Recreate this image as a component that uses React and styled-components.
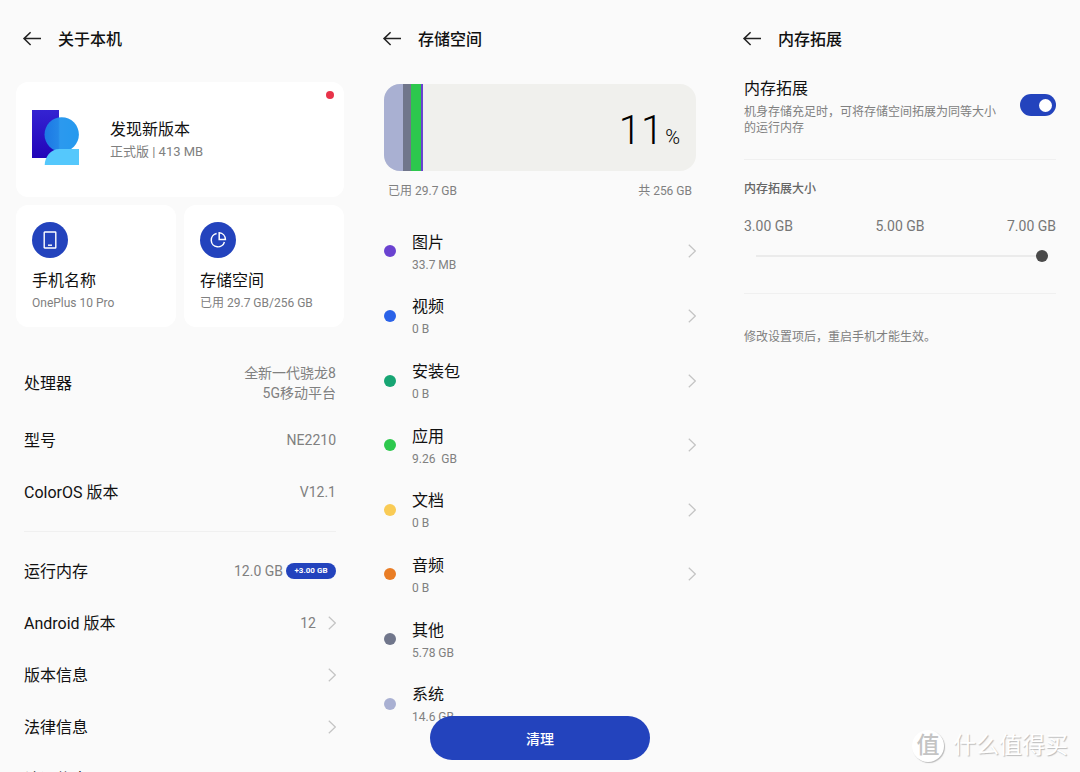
import React, { useState } from "react";
import styled, { createGlobalStyle } from "styled-components";

const GlobalStyle = createGlobalStyle`
  * {
    box-sizing: border-box;
  }
  body {
    margin: 0;
    background: #fafafa;
    color: #111;
    font-family: Roboto, "Noto Sans CJK SC", sans-serif;
    font-size: 16px;
    line-height: 24px;
  }
  h1, h2, p, ul, dl, dd, dt {
    margin: 0;
    padding: 0;
    font-size: inherit;
    font-weight: 400;
  }
  button, input {
    font-family: inherit;
    margin: 0;
  }
`;

const Page = styled.main`
  position: relative;
  display: grid;
  grid-template-columns: repeat(3, 1fr);
  height: 100vh;
  overflow: hidden;
`;

const Screen = styled.section`
  position: relative;
  min-width: 0;
  height: 100vh;
  overflow: hidden;
  padding: 0 24px;
`;

const Header = styled.header`
  display: flex;
  align-items: center;
  gap: 16px;
  height: 78px;

  h1 {
    padding-top: 2px;
    font-weight: 500;
  }
`;

const BackButton = styled.button`
  display: flex;
  width: 20px;
  height: 20px;
  margin-left: -2px;
  padding: 0;
  border: 0;
  background: none;
  color: #222;
`;

const Cards = styled.div`
  display: grid;
  grid-template-columns: 1fr 1fr;
  gap: 8px;
  margin: 4px -8px 25px;
`;

const Card = styled.article`
  padding: 17px 16px 14px;
  border-radius: 12px;
  background: #fff;

  h2 {
    margin-top: 11px;
  }
`;

const UpdateCard = styled(Card)`
  position: relative;
  grid-column: 1 / -1;
  display: flex;
  align-items: center;
  gap: 31px;
  height: 115px;
  padding: 0 16px;

  h2 {
    margin: 0;
  }
`;

const RedDot = styled.span`
  position: absolute;
  top: 9px;
  right: 10px;
  width: 8px;
  height: 8px;
  border-radius: 50%;
  background: #e8334a;
`;

const IconCircle = styled.div`
  display: flex;
  align-items: center;
  justify-content: center;
  width: 36px;
  height: 36px;
  border-radius: 50%;
  background: #2343bd;
`;

const Small = styled.p`
  color: #808080;
  font-size: ${props => (props.$large ? "13px" : "12px")};
  line-height: 20px;
  white-space: pre-wrap;
`;

const Row = styled.div`
  display: flex;
  align-items: center;
  justify-content: space-between;
  height: ${props => (props.$tall ? "62px" : "52px")};

  dt {
    padding-top: 2px;
  }
  dd {
    display: flex;
    align-items: center;
    color: #808080;
    font-size: 14px;
    line-height: 20px;
    text-align: right;
    white-space: pre-line;
  }
  dd svg {
    margin-left: 12px;
  }
`;

const Badge = styled.span`
  display: flex;
  align-items: center;
  justify-content: center;
  width: 50px;
  height: 16px;
  margin-left: 3px;
  border-radius: 8px;
  background: #2343bd;
  color: #fff;
  font-size: 8px;
  font-weight: 700;
`;

const Divider = styled.hr`
  height: 1px;
  margin: ${props => props.$margin};
  border: 0;
  background: #f0f0f0;
`;

const Usage = styled.div`
  display: flex;
  height: 87px;
  margin-top: 6px;
  border-radius: 16px;
  background: #f0f0ed;
  overflow: hidden;
`;

const Segment = styled.span`
  background: ${props => props.$color};
`;

const Percent = styled.p`
  display: flex;
  align-items: baseline;
  margin: 23px 16px 0 auto;
  color: #000;
  font-size: 40px;
  font-weight: 300;
  line-height: 48px;

  small {
    margin-left: 2px;
    font-size: 20px;
  }
`;

const UsageCaption = styled.div`
  display: flex;
  justify-content: space-between;
  margin: 10px 4px 18px;
`;

const CategoryList = styled.ul`
  display: grid;
  grid-auto-rows: 1fr;
  height: 517px;
  list-style: none;
`;

const Category = styled.li`
  display: flex;
  align-items: center;

  div {
    flex: 1;
    padding-top: 3px;
  }
`;

const Dot = styled.span`
  width: 12px;
  height: 12px;
  margin-right: 16px;
  border-radius: 50%;
  background: ${props => props.$color};
`;

const CleanButton = styled.button`
  position: absolute;
  bottom: 12px;
  left: 50%;
  width: 220px;
  height: 44px;
  margin-left: -110px;
  border: 0;
  border-radius: 22px;
  background: #2343bd;
  color: #fff;
  font-size: 14px;
  font-weight: 500;
`;

const SwitchRow = styled.label`
  display: flex;
  justify-content: space-between;
  gap: 24px;
  margin-bottom: 23px;

  h2 {
    margin-bottom: 4px;
    line-height: 22px;
  }
  p {
    color: #808080;
    font-size: 12px;
    line-height: 16px;
  }
`;

const Switch = styled.input`
  appearance: none;
  flex: none;
  display: flex;
  align-items: center;
  width: 36px;
  height: 22px;
  margin-top: 16px;
  padding: 0 4px;
  border-radius: 11px;
  background: #c8c8c8;

  &::before {
    content: "";
    width: 13px;
    height: 13px;
    border-radius: 50%;
    background: #fff;
  }
  &:checked {
    justify-content: flex-end;
    background: #2343bd;
  }
`;

const SizeLabel = styled.label`
  display: block;
  margin-top: 19px;
  color: #666;
  font-size: 12px;
  font-weight: 500;
  line-height: 20px;
`;

const Ticks = styled.div`
  display: flex;
  justify-content: space-between;
  margin-top: 17px;
  color: #777;
  font-size: 14px;
  line-height: 20px;
`;

const SliderBox = styled.div`
  display: flex;
  padding: 14px 8px 0 12px;
`;

const Slider = styled.input`
  appearance: none;
  width: 100%;
  height: 12px;
  background: linear-gradient(#ebebeb, #ebebeb) center / 100% 2px no-repeat;

  &::-webkit-slider-thumb {
    appearance: none;
    width: 12px;
    height: 12px;
    border-radius: 50%;
    background: #4a4a4a;
  }
`;

const Watermark = styled.div`
  position: absolute;
  right: 12px;
  bottom: 10px;
  display: flex;
  align-items: center;
  gap: 9px;
  color: #fff;
  font-size: 23px;
  line-height: 32px;
  text-shadow: 1px 1px 1px #bbb;
`;

const Seal = styled.span`
  width: 32px;
  height: 32px;
  border-radius: 50%;
  background: #fff;
  box-shadow: 1px 1px 1px #bbb;
  color: #c4c4c4;
  font-weight: 500;
  text-align: center;
  text-shadow: none;
`;

const specs = [
  { label: "处理器", value: "全新一代骁龙8\n5G移动平台", tall: true },
  { label: "型号", value: "NE2210" },
  { label: "ColorOS 版本", value: "V12.1" }
];

const details = [
  { label: "运行内存", value: "12.0 GB", badge: "+3.00 GB" },
  { label: "Android 版本", value: "12", link: true },
  { label: "版本信息", link: true },
  { label: "法律信息", link: true },
  { label: "认证信息", link: true }
];

const segments = [
  { color: "#a9b0d2", width: 19 },
  { color: "#70768b", width: 8 },
  { color: "#2dc84d", width: 10 },
  { color: "#6a42d0", width: 2 }
];

const categories = [
  { name: "图片", size: "33.7 MB", color: "#6a42d0", link: true },
  { name: "视频", size: "0 B", color: "#2a62e8", link: true },
  { name: "安装包", size: "0 B", color: "#17a573", link: true },
  { name: "应用", size: "9.26  GB", color: "#2dc84d", link: true },
  { name: "文档", size: "0 B", color: "#f9cb55", link: true },
  { name: "音频", size: "0 B", color: "#e97d25", link: true },
  { name: "其他", size: "5.78 GB", color: "#70768b" },
  { name: "系统", size: "14.6 GB", color: "#a9b0d2" }
];

function Chevron() {
  return (
    <svg width="8" height="14" viewBox="0 0 8 14" fill="none" stroke="#c4c4c4" strokeWidth="1.2">
      <path d="M.8.8 7.3 7 .8 13.2" />
    </svg>
  );
}

function TitleBar({ title }) {
  return (
    <Header>
      <BackButton aria-label="返回">
        <svg width="20" height="20" viewBox="0 0 20 20" fill="none" stroke="currentColor" strokeWidth="1.5">
          <path d="M8.6 3.2 2 9.6l6.6 6.4M2 9.6h17" />
        </svg>
      </BackButton>
      <h1>{title}</h1>
    </Header>
  );
}

function UpdateLogo() {
  return (
    <svg width="47" height="60" viewBox="0 0 47 60">
      <defs>
        <linearGradient id="head">
          <stop offset="0" stopColor="#1c78e4" />
          <stop offset=".4" stopColor="#2488e8" />
          <stop offset=".45" stopColor="#2c99ee" />
          <stop offset="1" stopColor="#2599ee" />
        </linearGradient>
        <linearGradient id="sheet" x2="0" y2="1">
          <stop offset="0" stopColor="#3423d2" />
          <stop offset="1" stopColor="#2204b8" />
        </linearGradient>
      </defs>
      <path fill="url(#sheet)" d="M0 0h27v48H0z" />
      <circle cx="29.7" cy="24.5" r="17.2" fill="url(#head)" />
      <path fill="#55c8fc" d="M12.7 55c0-8 6-16 14.5-16H47v16z" />
    </svg>
  );
}

function SpecRow({ item }) {
  return (
    <Row $tall={item.tall}>
      <dt>{item.label}</dt>
      <dd>
        {item.value}
        {item.badge && <Badge>{item.badge}</Badge>}
        {item.link && <Chevron />}
      </dd>
    </Row>
  );
}

function AboutScreen() {
  return (
    <Screen>
      <TitleBar title="关于本机" />
      <Cards>
        <UpdateCard>
          <UpdateLogo />
          <div>
            <h2>发现新版本</h2>
            <Small $large>正式版 | 413 MB</Small>
          </div>
          <RedDot />
        </UpdateCard>
        <Card>
          <IconCircle>
            <svg width="14" height="18" viewBox="0 0 14 18" fill="none" stroke="#fff" strokeWidth="1.4">
              <rect x="1.2" y="1" width="11.6" height="16" rx=".5" />
              <path d="M5 14.2h4" />
            </svg>
          </IconCircle>
          <h2>手机名称</h2>
          <Small>OnePlus 10 Pro</Small>
        </Card>
        <Card>
          <IconCircle>
            <svg width="18" height="18" viewBox="0 0 18 18" fill="none" stroke="#fff" strokeWidth="1.5">
              <path d="M7.6 2.6a6.7 6.7 0 1 0 7.8 8.4" />
              <path d="M10.2 1.8v6.8h6.2c0-3.8-2.6-6.5-6.2-6.8z" />
            </svg>
          </IconCircle>
          <h2>存储空间</h2>
          <Small>已用 29.7 GB/256 GB</Small>
        </Card>
      </Cards>
      <dl>
        {specs.map(item => (
          <SpecRow key={item.label} item={item} />
        ))}
      </dl>
      <Divider $margin="13px 0" />
      <dl>
        {details.map(item => (
          <SpecRow key={item.label} item={item} />
        ))}
      </dl>
    </Screen>
  );
}

function StorageScreen() {
  return (
    <Screen>
      <TitleBar title="存储空间" />
      <Usage>
        {segments.map(segment => (
          <Segment key={segment.color} $color={segment.color} style={{ width: segment.width }} />
        ))}
        <Percent>
          11<small>%</small>
        </Percent>
      </Usage>
      <UsageCaption>
        <Small>已用 29.7 GB</Small>
        <Small>共 256 GB</Small>
      </UsageCaption>
      <CategoryList>
        {categories.map(category => (
          <Category key={category.name}>
            <Dot $color={category.color} />
            <div>
              <h2>{category.name}</h2>
              <Small>{category.size}</Small>
            </div>
            {category.link && <Chevron />}
          </Category>
        ))}
      </CategoryList>
      <CleanButton>清理</CleanButton>
    </Screen>
  );
}

function MemoryScreen() {
  const [enabled, setEnabled] = useState(true);
  const [size, setSize] = useState(7);

  return (
    <Screen>
      <TitleBar title="内存拓展" />
      <SwitchRow>
        <div>
          <h2>内存拓展</h2>
          <p>机身存储充足时，可将存储空间拓展为同等大小的运行内存</p>
        </div>
        <Switch type="checkbox" role="switch" checked={enabled} onChange={e => setEnabled(e.target.checked)} />
      </SwitchRow>
      <Divider $margin="0" />
      <SizeLabel htmlFor="size">内存拓展大小</SizeLabel>
      <Ticks>
        <span>3.00 GB</span>
        <span>5.00 GB</span>
        <span>7.00 GB</span>
      </Ticks>
      <SliderBox>
        <Slider
          id="size"
          type="range"
          min="3"
          max="7"
          step="2"
          value={size}
          onChange={e => setSize(Number(e.target.value))}
        />
      </SliderBox>
      <Divider $margin="31px 0 33px" />
      <Small>修改设置项后，重启手机才能生效。</Small>
    </Screen>
  );
}

export default function App() {
  return (
    <>
      <GlobalStyle />
      <Page>
        <AboutScreen />
        <StorageScreen />
        <MemoryScreen />
        <Watermark>
          <Seal>值</Seal>
          什么值得买
        </Watermark>
      </Page>
    </>
  );
}
